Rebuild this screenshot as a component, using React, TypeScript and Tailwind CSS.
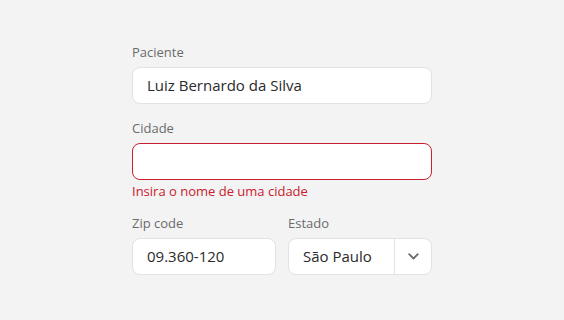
import React from "react";

const font = { fontFamily: '"Open Sans", "Noto Sans", sans-serif' };

export default function App() {
  return (
    <div
      className="h-[320px] w-full bg-[#f3f3f3] flex justify-center pt-[44px]"
      style={font}
    >
      <div className="w-[300px] flex flex-col">
        <label className="text-[13px] leading-[16px] text-[#6b6b6b]">Paciente</label>
        <div className="mt-[7px] h-[37px] rounded-[8px] border border-[#e2e2e2] bg-white flex items-center px-[14px] text-[15px] text-[#2a2a2a]">
          Luiz Bernardo da Silva
        </div>

        <label className="mt-4 text-[13px] leading-[16px] text-[#6b6b6b]">Cidade</label>
        <div className="mt-[7px] h-[37px] rounded-[8px] border border-[#c8202c] bg-white" />
        <div className="mt-[3px] text-[13px] leading-[16px] text-[#c8202c]">
          Insira o nome de uma cidade
        </div>

        <div className="mt-4 grid grid-cols-2 gap-3">
          <div className="flex flex-col">
            <label className="text-[13px] leading-[16px] text-[#6b6b6b]">Zip code</label>
            <div className="mt-[7px] h-[37px] rounded-[8px] border border-[#e2e2e2] bg-white flex items-center px-[14px] text-[15px] text-[#2a2a2a]">
              09.360-120
            </div>
          </div>
          <div className="flex flex-col">
            <label className="text-[13px] leading-[16px] text-[#6b6b6b]">Estado</label>
            <div className="mt-[7px] h-[37px] rounded-[8px] border border-[#e2e2e2] bg-white flex items-stretch text-[15px] text-[#2a2a2a]">
              <div className="flex-1 flex items-center px-[14px]">São Paulo</div>
              <div className="w-[37px] border-l border-[#e2e2e2] flex items-center justify-center">
                <svg width="11" height="7" viewBox="0 0 11 7" fill="none">
                  <path d="M1.2 1.2 L5.5 5.5 L9.8 1.2" stroke="#6b6b6b" strokeWidth="1.8" strokeLinecap="round" strokeLinejoin="round" />
                </svg>
              </div>
            </div>
          </div>
        </div>
      </div>
    </div>
  );
}
